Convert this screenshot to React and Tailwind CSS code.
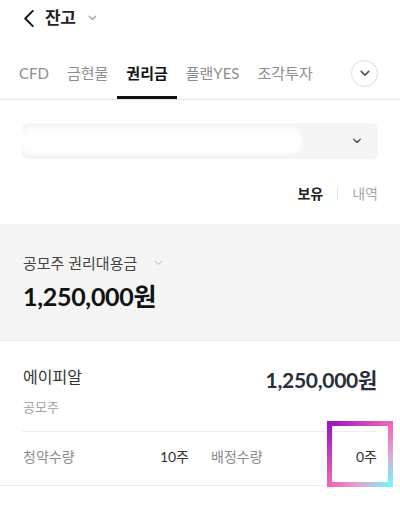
import React, { useState } from 'react';

const tabs = ['CFD', '금현물', '권리금', '플랜YES', '조각투자'];

const ChevronDown = ({ className, strokeWidth = 1.5 }) => (
  <svg viewBox="0 0 12 8" className={className} fill="none" stroke="currentColor" strokeWidth={strokeWidth} strokeLinecap="round" strokeLinejoin="round">
    <path d="M1.5 1.5 L6 6 L10.5 1.5" />
  </svg>
);

const App = () => {
  const [activeTab, setActiveTab] = useState('권리금');
  const [view, setView] = useState('보유');

  return (
    <div className="relative w-[400px] min-h-[529px] bg-white font-['Lato','Noto_Sans_CJK_KR',sans-serif] text-[#222]">
      {/* header */}
      <div className="flex items-center h-[36px] pl-[23px]">
        <svg viewBox="0 0 12 20" className="w-[12px] h-[19px] text-[#111]" fill="none" stroke="currentColor" strokeWidth="2" strokeLinecap="round" strokeLinejoin="round">
          <path d="M10 2 L2 10 L10 18" />
        </svg>
        <span className="ml-[10px] text-[17px] font-bold tracking-[-0.3px]">잔고</span>
        <ChevronDown className="ml-[12px] w-[9px] h-[6px] text-[#999]" />
      </div>

      {/* tabs */}
      <div className="flex items-center pt-[11px] pl-[10px] pr-[22px] border-b border-[#e6e6e6]">
        {tabs.map((t) => (
          <button
            key={t}
            onClick={() => setActiveTab(t)}
            className={`h-[52px] pt-[3px] px-[9px] flex items-center border-b-[3px] text-[15px] whitespace-nowrap ${
              activeTab === t ? 'border-[#111] text-[#111] font-bold' : 'border-transparent text-[#8d8d8d]'
            }`}
          >
            {t}
          </button>
        ))}
        <div className="ml-auto w-[27px] h-[27px] rounded-full border border-[#dcdcdc] flex items-center justify-center">
          <ChevronDown className="w-[10px] h-[7px] text-[#555]" strokeWidth={2} />
        </div>
      </div>

      {/* account select */}
      <div className="mx-[22px] mt-[23px] h-[36px] rounded-[6px] bg-[#f5f5f5] flex items-center pr-[16px] overflow-hidden">
        <div className="-ml-[2px] w-[282px] h-[26px] rounded-full bg-white blur-[2px]" />
        <ChevronDown className="ml-auto w-[10px] h-[6px] text-[#333]" />
      </div>

      {/* 보유 / 내역 */}
      <div className="flex items-center justify-end h-[34px] mt-[17px] pr-[22px] text-[14px]">
        {['보유', '내역'].map((v, i) => (
          <React.Fragment key={v}>
            {i > 0 && <span className="mx-[14px] w-px h-[13px] bg-[#e2e2e2]" />}
            <button onClick={() => setView(v)} className={view === v ? 'font-bold text-[#222]' : 'text-[#a5a5a5]'}>
              {v}
            </button>
          </React.Fragment>
        ))}
      </div>

      {/* summary */}
      <div className="mt-[14px] bg-[#f5f5f5] border-b border-[#ececec] pt-[28px] pb-[27px] px-[23px]">
        <div className="flex items-center h-[22px] text-[15px] text-[#444]">
          공모주 권리대용금
          <ChevronDown className="ml-[17px] w-[9px] h-[6px] text-[#aaa]" strokeWidth={1.2} />
        </div>
        <div className="mt-[7px] h-[32px] flex items-center text-[25px] font-bold text-[#111] tracking-[-0.3px]">1,250,000원</div>
      </div>

      {/* item */}
      <div className="border-b border-[#ececec]">
        <div className="flex justify-between items-start px-[23px] pt-[24px]">
          <div>
            <div className="h-[24px] flex items-center text-[16px] text-[#333]">에이피알</div>
            <div className="mt-[10px] h-[18px] flex items-center text-[13px] text-[#a0a0a0]">공모주</div>
          </div>
          <div className="mt-[1px] h-[28px] flex items-center text-[21px] font-bold text-[#2a2e3b] tracking-[-0.3px]">1,250,000원</div>
        </div>
        <div className="mx-[22px] mt-[14px] border-t border-[#eeeeee]" />
        <div className="grid grid-cols-2 gap-[22px] px-[23px] h-[53px] pb-[4px] items-center text-[14px]">
          <div className="flex justify-between">
            <span className="text-[#8b8b8b]">청약수량</span>
            <span className="text-[#333]">10주</span>
          </div>
          <div className="flex justify-between">
            <span className="text-[#8b8b8b]">배정수량</span>
            <span className="text-[#333]">0주</span>
          </div>
        </div>
      </div>

      {/* highlight frame */}
      <div className="absolute left-[327px] top-[421px] w-[66px] h-[66px] border-[5px] [border-image:linear-gradient(135deg,#9a16c2,#ee64b8_50%,#e99ac8_70%,#7af2f8)_1] pointer-events-none" />
    </div>
  );
};

export default App;
